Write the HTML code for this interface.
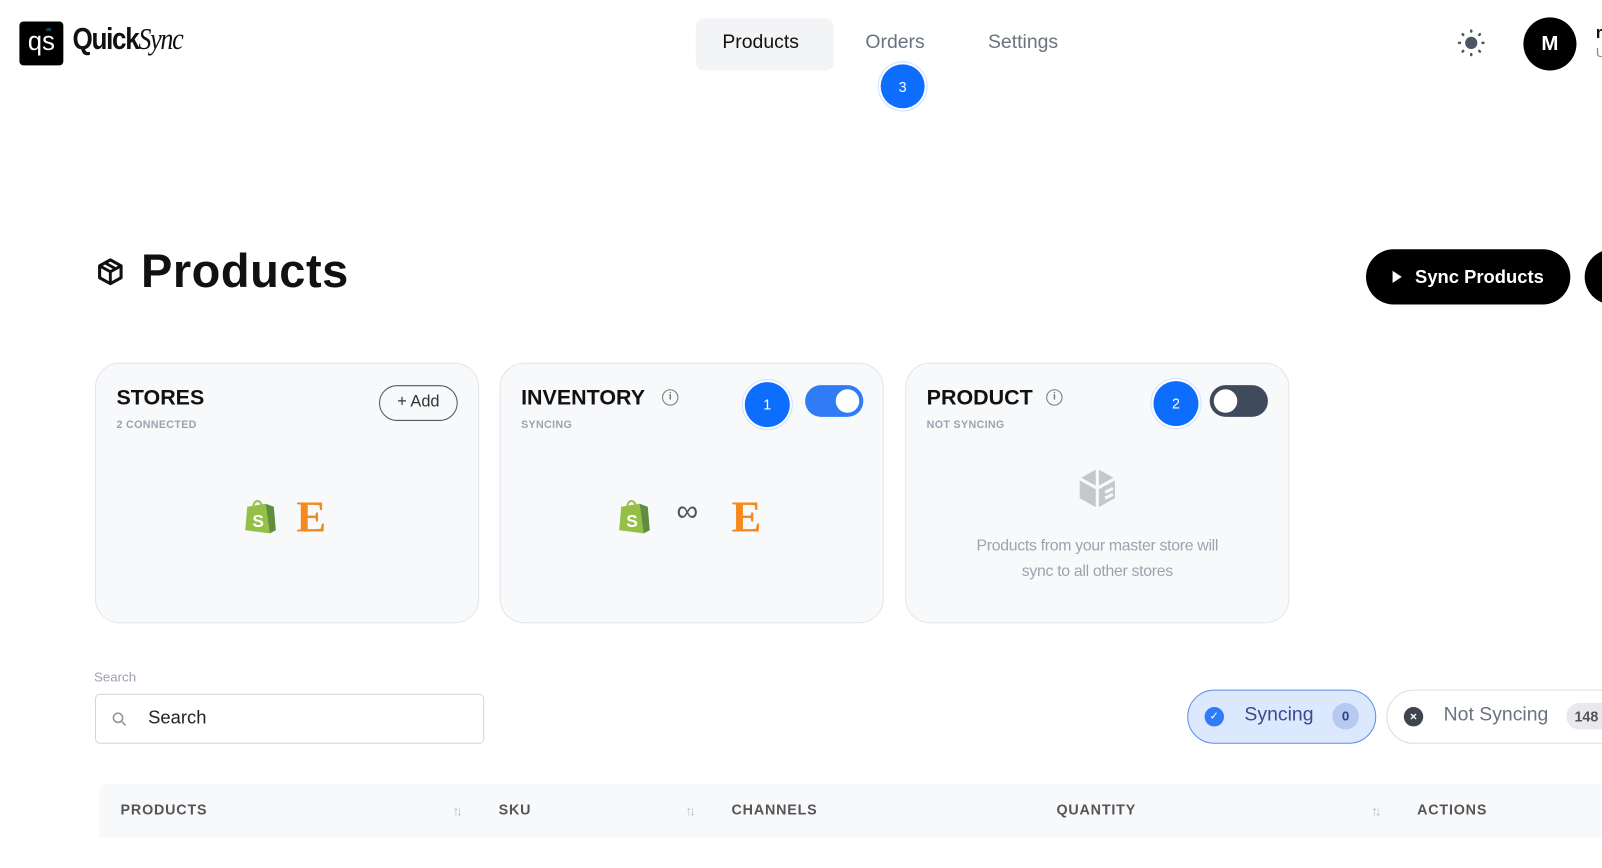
<!DOCTYPE html>
<html><head><meta charset="utf-8">
<style>
*{box-sizing:border-box;margin:0;padding:0}
body{width:1602px;height:868px;overflow:hidden;background:#fff;font-family:"Liberation Sans",sans-serif;color:#111;position:relative}
#w{position:absolute;left:0;top:0;width:1568px;height:850px;transform:scale(1.0217);transform-origin:0 0}
.abs{position:absolute}
.card{position:absolute;top:355px;width:376px;height:255px;background:#f8f9fb;border:1px solid #e3e5e8;border-radius:24px}
.card h3{position:absolute;left:20px;top:22px;font-size:21px;font-weight:700;color:#111}
.card .sub{position:absolute;left:20px;top:54px;font-size:10.5px;font-weight:700;color:#9ca3af;letter-spacing:.3px}
.badge{position:absolute;width:44px;height:44px;border-radius:50%;background:#0d6efd;color:#fff;font-size:14px;display:flex;align-items:center;justify-content:center;box-shadow:0 0 0 2px #fff,0 0 0 3px #cfe0ff}
.tog{position:absolute;width:57px;height:31px;border-radius:16px}
.tog i{position:absolute;top:4px;width:23px;height:23px;border-radius:50%;background:#fff}
.info{position:absolute;width:16px;height:16px;border:1.5px solid #777;border-radius:50%;font-size:10px;color:#777;text-align:center;line-height:13px;font-weight:700}
.th{position:absolute;top:784px;font-size:14px;font-weight:700;color:#555;letter-spacing:.8px}
.sort{position:absolute;top:786px;font-size:13px;color:#bbb;letter-spacing:-3px}
</style></head><body><div id="w">
<div class="abs" style="left:19px;top:21px;width:43px;height:43px;background:#000;border-radius:4px;color:#fff;font-size:25px;text-align:center;line-height:40px">qs</div>
<div class="abs" style="left:45px;top:26px;font-size:7px;color:#37b3d0">∞</div>
<div class="abs" style="left:71px;top:22px;font-size:30px;font-weight:700;letter-spacing:-1.5px;transform:scaleX(.85);transform-origin:0 0">Quick<span style="font-family:'Liberation Serif',serif;font-style:italic;font-weight:400">Sync</span></div>
<div class="abs" style="left:681px;top:18px;width:135px;height:51px;background:#f3f4f6;border-radius:8px"></div>
<div class="abs" style="left:707px;top:31px;font-size:19px;color:#111">Products</div>
<div class="abs" style="left:847px;top:31px;font-size:19px;color:#6b7280">Orders</div>
<div class="abs" style="left:967px;top:31px;font-size:19px;color:#6b7280">Settings</div>
<div class="badge" style="left:862px;top:63px;width:43px;height:43px">3</div>
<svg class="abs" style="left:1426px;top:28px" width="28" height="28" viewBox="0 0 28 28"><circle cx="14" cy="14" r="6" fill="#4b5563"/><g stroke="#4b5563" stroke-width="2.4" stroke-linecap="round"><path d="M14 2v1M14 25v1M2 14h1M25 14h1M5.5 5.5l.7.7M21.8 21.8l.7.7M5.5 22.5l.7-.7M21.8 6.2l.7-.7"/></g></svg>
<div class="abs" style="left:1491px;top:17px;width:52px;height:52px;border-radius:50%;background:#000;color:#fff;font-size:20px;font-weight:700;text-align:center;line-height:52px">M</div>
<div class="abs" style="left:1562px;top:24px;font-size:16px;font-weight:700">r</div>
<div class="abs" style="left:1562px;top:44px;font-size:13px;color:#888">U</div>
<svg class="abs" style="left:94px;top:252px" width="28" height="28" viewBox="0 0 24 24"><path d="M12 2L3 7v10l9 5 9-5V7z" fill="none" stroke="#111" stroke-width="2.6" stroke-linejoin="round"/><path d="M3 7l9 5 9-5M12 12v10M7.5 4.5l9 5" stroke="#111" stroke-width="2.4" fill="none"/></svg>
<div class="abs" style="left:138px;top:238px;font-size:46px;font-weight:700;letter-spacing:.5px">Products</div>
<div class="abs" style="left:1337px;top:244px;width:200px;height:54px;background:#000;border-radius:27px;color:#fff;font-size:18px;font-weight:700;line-height:54px;padding-left:48px">Sync Products</div>
<div class="abs" style="left:1363px;top:265px;width:0;height:0;border-left:9px solid #fff;border-top:6px solid transparent;border-bottom:6px solid transparent"></div>
<div class="abs" style="left:1551px;top:244px;width:80px;height:54px;background:#000;border-radius:27px"></div>
<div class="card" style="left:93px">
 <h3>STORES</h3><div class="sub">2 CONNECTED</div>
 <div class="abs" style="left:277px;top:21px;width:77px;height:35px;border:1.5px solid #555;border-radius:18px;font-size:16px;color:#333;text-align:center;line-height:31px">+ Add</div>
 <svg class="abs" style="left:144px;top:131px" width="34" height="37" viewBox="0 0 34 37"><path d="M4 9l18-3 4 29-24-3z" fill="#95bf47"/><path d="M22 6l8 3 2 23-6 3z" fill="#5e8e3e"/><path d="M10 9c0-6 6-8 8-2" stroke="#95bf47" stroke-width="2" fill="none"/><text x="9" y="29" font-size="17" font-weight="bold" fill="#fff" font-family="Liberation Sans">S</text></svg>
 <div class="abs" style="left:196px;top:124px;font-family:'Liberation Serif',serif;font-weight:700;font-size:44px;color:#f48a1f">E</div>
</div>
<div class="card" style="left:489px">
 <h3>INVENTORY</h3><div class="sub">SYNCING</div>
 <div class="info" style="left:158px;top:25px">i</div>
 <div class="badge" style="left:239px;top:18px">1</div>
 <div class="tog" style="left:298px;top:21px;background:#2f7cf6"><i style="left:30px"></i></div>
 <svg class="abs" style="left:114px;top:131px" width="34" height="37" viewBox="0 0 34 37"><path d="M4 9l18-3 4 29-24-3z" fill="#95bf47"/><path d="M22 6l8 3 2 23-6 3z" fill="#5e8e3e"/><path d="M10 9c0-6 6-8 8-2" stroke="#95bf47" stroke-width="2" fill="none"/><text x="9" y="29" font-size="17" font-weight="bold" fill="#fff" font-family="Liberation Sans">S</text></svg>
 <div class="abs" style="left:172px;top:128px;font-size:30px;color:#555">∞</div>
 <div class="abs" style="left:226px;top:124px;font-family:'Liberation Serif',serif;font-weight:700;font-size:44px;color:#f48a1f">E</div>
</div>
<div class="card" style="left:886px">
 <h3>PRODUCT</h3><div class="sub">NOT SYNCING</div>
 <div class="info" style="left:137px;top:25px">i</div>
 <div class="badge" style="left:242px;top:17px">2</div>
 <div class="tog" style="left:297px;top:21px;background:#3f4a5a"><i style="left:4px"></i></div>
 <svg class="abs" style="left:164px;top:99px" width="46" height="46" viewBox="0 0 24 24"><path d="M12 2L3 7v10l9 5 9-5V7z" fill="#c4c7cc"/><path d="M3 7l9 5 9-5M12 12v10M12 2v10M16 14l4-2M16 17l4-2" stroke="#f8f9fb" stroke-width="1.6" fill="none"/></svg>
 <div class="abs" style="left:0;width:374px;top:166px;text-align:center;font-size:15.5px;line-height:25px;color:#9ca3af;letter-spacing:-.3px">Products from your master store will<br>sync to all other stores</div>
</div>
<div class="abs" style="left:92px;top:655px;font-size:13px;color:#9ca3af">Search</div>
<div class="abs" style="left:93px;top:679px;width:381px;height:49px;border:1px solid #d1d5db;border-radius:5px"></div>
<svg class="abs" style="left:109px;top:696px" width="16" height="16" viewBox="0 0 16 16"><circle cx="6.5" cy="6.5" r="4.5" stroke="#999" stroke-width="1.6" fill="none"/><path d="M10 10l4 4" stroke="#999" stroke-width="1.6"/></svg>
<div class="abs" style="left:145px;top:692px;font-size:18px;color:#222">Search</div>
<div class="abs" style="left:1162px;top:675px;width:185px;height:53px;border:1.5px solid #5b8ee6;background:#dbe8fd;border-radius:27px"></div>
<div class="abs" style="left:1179px;top:692px;width:19px;height:19px;border-radius:50%;background:#2f7cf6;color:#fff;font-size:11px;text-align:center;line-height:19px">✓</div>
<div class="abs" style="left:1218px;top:689px;font-size:19px;color:#3b4a8f">Syncing</div>
<div class="abs" style="left:1304px;top:688px;width:26px;height:26px;border-radius:50%;background:#b7c9ee;color:#2d3f8a;font-size:13px;font-weight:700;text-align:center;line-height:26px">0</div>
<div class="abs" style="left:1357px;top:675px;width:260px;height:53px;border:1.5px solid #ddd;background:#fff;border-radius:27px"></div>
<div class="abs" style="left:1374px;top:692px;width:19px;height:19px;border-radius:50%;background:#3f4550;color:#fff;font-size:12px;font-weight:700;text-align:center;line-height:19px">×</div>
<div class="abs" style="left:1413px;top:689px;font-size:19px;color:#6b7280">Not Syncing</div>
<div class="abs" style="left:1533px;top:688px;width:50px;height:26px;border-radius:13px;background:#e8e9ec;color:#555;font-size:14px;font-weight:700;line-height:26px;padding-left:8px">148</div>
<div class="abs" style="left:97px;top:767px;width:1505px;height:53px;background:#f8f9fb;border-radius:8px 0 0 0"></div>
<div class="th" style="left:118px">PRODUCTS</div>
<div class="sort" style="left:443px">↑↓</div>
<div class="th" style="left:488px">SKU</div>
<div class="sort" style="left:671px">↑↓</div>
<div class="th" style="left:716px">CHANNELS</div>
<div class="th" style="left:1034px">QUANTITY</div>
<div class="sort" style="left:1342px">↑↓</div>
<div class="th" style="left:1387px">ACTIONS</div>
</div></body></html>
